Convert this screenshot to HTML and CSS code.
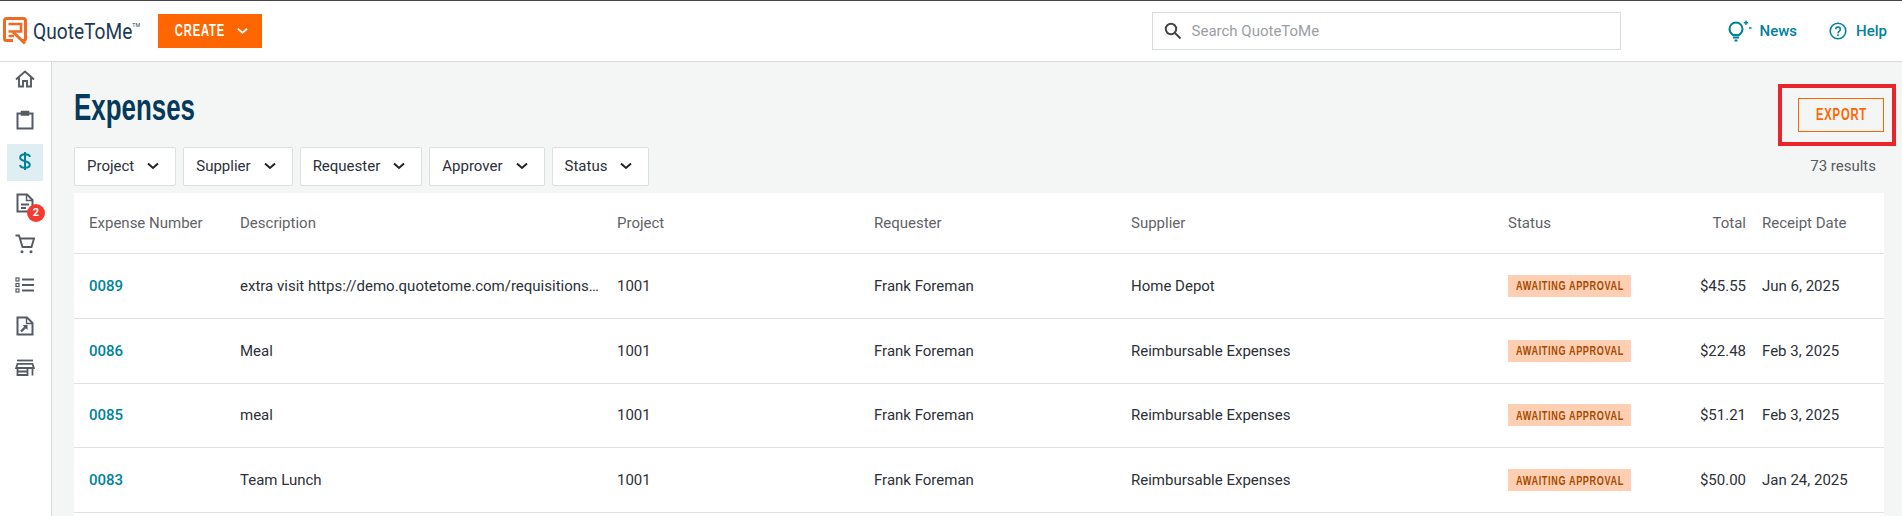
FILE: index.html
```html
<!DOCTYPE html>
<html lang="en">
<head>
    <meta charset="UTF-8">
    <title>Expenses - QuoteToMe</title>
    <link rel="stylesheet" href="styles.css">
</head>
<body>
    <header class="topbar">
        <div class="brand">
            <svg class="brand-mark" viewBox="0 0 24 28" width="24" height="28" fill="none" stroke="#f26a21" stroke-width="3">
                <path d="M10 23.500H3.500A2 2 0 0 1 1.500 21.500V3.500A2 2 0 0 1 3.500 1.500H20.500A2 2 0 0 1 22.500 3.500V21.500A2 2 0 0 1 20.500 23.500H19"/>
                <path d="M5.500 7H18V14.500H5.500M5.500 19H11" stroke-width="2.600"/>
                <path d="M10 15L22 26.500" stroke-width="3"/>
            </svg>
            <span class="brand-name">QuoteToMe<sup>TM</sup></span>
        </div>
        <button class="create-btn"><span class="narrow">CREATE</span>
            <svg viewBox="0 0 12 8" width="11" height="8" fill="none" stroke="#fff" stroke-width="2"><path d="M1 1.500L6 6L11 1.500"/></svg>
        </button>
        <div class="search-box">
            <svg viewBox="0 0 18 18" width="18" height="18" fill="none" stroke="#444" stroke-width="2"><circle cx="7" cy="7" r="5.200"/><path d="M11 11L16.500 16.500"/></svg>
            <span>Search QuoteToMe</span>
        </div>
        <a class="top-link news">
            <svg viewBox="0 0 24 22" width="24" height="22" fill="none" stroke="#00829b" stroke-width="2">
                <path d="M5 15C2.800 13.500 1.500 11.500 1.500 9A6.500 6.500 0 0 1 14.500 9C14.500 11.500 13.200 13.500 11 15Z"/>
                <path d="M5 17.500H11M6.500 20.500H9.500"/>
                <path d="M18 0.500V5M15.800 2.800H20.200M21 8H23.500" stroke-width="1.400"/>
            </svg>
            News
        </a>
        <a class="top-link help">
            <svg viewBox="0 0 18 18" width="18" height="18" fill="none" stroke="#00829b" stroke-width="1.600">
                <circle cx="9" cy="9" r="7.800"/>
                <path d="M6.700 7.200A2.300 2.300 0 1 1 10.300 9.200C9.300 9.800 9 10.200 9 11.200"/>
                <path d="M9 12.300V14"/>
            </svg>
            Help
        </a>
    </header>

    <div class="layout">
        <nav class="sidebar">
            <a class="nav-item"><svg viewBox="0 0 20 18" width="20" height="18" fill="none" stroke="#555b63" stroke-width="1.900"><path d="M1 9.500L10 1.500L19 9.500M4 7.500V16.500H8V11H12V16.500H16V7.500"/></svg></a>
            <a class="nav-item"><svg viewBox="0 0 20 20" width="20" height="20" fill="none" stroke="#555b63" stroke-width="2"><path d="M6 3.500H2.500V18.500H17.500V3.500H14"/><path d="M6.500 1.500H13.500V5H6.500Z" fill="#555b63" stroke-width="1.500"/></svg></a>
            <a class="nav-item active"><svg viewBox="0 0 12 20" width="12" height="20" fill="none" stroke="#00829b" stroke-width="2"><path d="M10.800 6C10.800 4 9 3.300 6 3.300S1.200 4.500 1.200 6.800C1.200 9.200 3.500 9.600 6 10.200S10.800 11.500 10.800 13.800C10.800 16 9 16.800 6 16.800S1.200 16 1.200 14"/><path d="M6 1V19"/></svg></a>
            <a class="nav-item has-badge">
                <svg viewBox="0 0 18 20" width="18" height="20" fill="none" stroke="#555b63" stroke-width="2"><path d="M1.500 1.500H11L16.500 7V18.500H1.500Z"/><path d="M10.500 1.500V7.500H16.500" stroke-width="1.400"/><path d="M5 11.500H13M5 15H10"/></svg>
                <span class="badge">2</span>
            </a>
            <a class="nav-item"><svg viewBox="0 0 20 20" width="20" height="20" fill="none" stroke="#555b63" stroke-width="1.900"><path d="M0.500 1.500H4L7.500 13H16.500L19 4.500H4.800"/><circle cx="7" cy="17.800" r="1.500" fill="#555b63" stroke="none"/><circle cx="16" cy="17.800" r="1.500" fill="#555b63" stroke="none"/></svg></a>
            <a class="nav-item"><svg viewBox="0 0 20 16" width="20" height="16" fill="none" stroke="#555b63" stroke-width="1.200"><rect x="1" y="1" width="3" height="3"/><rect x="1" y="6.500" width="3" height="3"/><rect x="1" y="12" width="3" height="3"/><path d="M7 2.500H19M7 8H19M7 13.500H19" stroke-width="2"/></svg></a>
            <a class="nav-item"><svg viewBox="0 0 18 20" width="18" height="20" fill="none" stroke="#555b63" stroke-width="2"><path d="M1.500 1.500H11L16.500 7V18.500H1.500Z"/><path d="M10.500 1.500V7.500H16.500" stroke-width="1.400"/><path d="M5 15.500L9.500 11" stroke-width="2.400"/><path d="M6.500 9H11.500V14Z" fill="#555b63" stroke="none"/></svg></a>
            <a class="nav-item"><svg viewBox="0 0 20 17" width="20" height="17" fill="none" stroke="#555b63" stroke-width="1.800"><path d="M2 1.500H18"/><path d="M2.500 4.800H17.500L18.800 9H1.200Z"/><path d="M2.500 9V16H12.500V9M17.500 9V16.500M2.500 12.500H12.500"/></svg></a>
        </nav>

        <main class="content">
            <div class="title-row">
                <h1>Expenses</h1>
                <div class="export-mark"><button class="export-btn"><span class="narrow">EXPORT</span></button></div>
            </div>
            <div class="filter-row">
                <div class="filters">
                    <button class="filter">Project <svg viewBox="0 0 12 8" width="12" height="8" fill="none" stroke="#222" stroke-width="2"><path d="M1 1.500L6 6L11 1.500"/></svg></button>
                    <button class="filter">Supplier <svg viewBox="0 0 12 8" width="12" height="8" fill="none" stroke="#222" stroke-width="2"><path d="M1 1.500L6 6L11 1.500"/></svg></button>
                    <button class="filter">Requester <svg viewBox="0 0 12 8" width="12" height="8" fill="none" stroke="#222" stroke-width="2"><path d="M1 1.500L6 6L11 1.500"/></svg></button>
                    <button class="filter">Approver <svg viewBox="0 0 12 8" width="12" height="8" fill="none" stroke="#222" stroke-width="2"><path d="M1 1.500L6 6L11 1.500"/></svg></button>
                    <button class="filter">Status <svg viewBox="0 0 12 8" width="12" height="8" fill="none" stroke="#222" stroke-width="2"><path d="M1 1.500L6 6L11 1.500"/></svg></button>
                </div>
                <span class="results">73 results</span>
            </div>

            <table class="expenses">
                <colgroup>
                    <col class="col-number"><col class="col-desc"><col class="col-project"><col class="col-requester"><col class="col-supplier"><col class="col-status"><col class="col-total"><col class="col-date">
                </colgroup>
                <thead>
                    <tr>
                        <th>Expense Number</th><th>Description</th><th>Project</th><th>Requester</th><th>Supplier</th><th>Status</th><th class="total">Total</th><th class="date">Receipt Date</th>
                    </tr>
                </thead>
                <tbody>
                    <tr>
                        <td><a class="num">0089</a></td><td class="desc">extra visit https://demo.quotetome.com/requisitions…</td><td>1001</td><td>Frank Foreman</td><td>Home Depot</td>
                        <td><span class="status"><span class="narrow">AWAITING APPROVAL</span></span></td><td class="total">$45.55</td><td class="date">Jun 6, 2025</td>
                    </tr>
                    <tr>
                        <td><a class="num">0086</a></td><td class="desc">Meal</td><td>1001</td><td>Frank Foreman</td><td>Reimbursable Expenses</td>
                        <td><span class="status"><span class="narrow">AWAITING APPROVAL</span></span></td><td class="total">$22.48</td><td class="date">Feb 3, 2025</td>
                    </tr>
                    <tr>
                        <td><a class="num">0085</a></td><td class="desc">meal</td><td>1001</td><td>Frank Foreman</td><td>Reimbursable Expenses</td>
                        <td><span class="status"><span class="narrow">AWAITING APPROVAL</span></span></td><td class="total">$51.21</td><td class="date">Feb 3, 2025</td>
                    </tr>
                    <tr>
                        <td><a class="num">0083</a></td><td class="desc">Team Lunch</td><td>1001</td><td>Frank Foreman</td><td>Reimbursable Expenses</td>
                        <td><span class="status"><span class="narrow">AWAITING APPROVAL</span></span></td><td class="total">$50.00</td><td class="date">Jan 24, 2025</td>
                    </tr>
                    <tr>
                        <td></td><td></td><td></td><td></td><td></td><td></td><td></td><td></td>
                    </tr>
                </tbody>
            </table>
        </main>
    </div>
</body>
</html>
```

FILE: styles.css
```css
* {
    box-sizing: border-box;
}
html, body {
    height: 100%;
}
body {
    margin: 0;
    overflow: hidden;
    font-family: Roboto, sans-serif;
    font-size: 15px;
    color: #2c3038;
    background-color: white;
}
button {
    font-family: inherit;
    cursor: pointer;
}

/* no condensed font installed, so squeeze the bold sans for the display text */
.narrow {
    display: inline-block;
    flex: none;
    white-space: nowrap;
    font-family: "Liberation Sans", sans-serif;
    font-weight: bold;
    transform: scaleX(0.7);
}

.topbar {
    display: flex;
    align-items: center;
    height: 62px;
    border-top: 1px solid #444;
    border-bottom: 1px solid #d9dcdc;
    padding-right: 15px;
}
.brand {
    display: flex;
    align-items: center;
    gap: 6px;
    flex: 0 0 155px;
    margin-left: 3px;
}
.brand-name {
    display: inline-block;
    white-space: nowrap;
    font-size: 22px;
    color: #1d3a54;
    transform: scaleX(0.87);
    transform-origin: left center;
}
.brand-name sup {
    font-size: 6px;
    vertical-align: 12px;
}
.create-btn {
    display: flex;
    align-items: center;
    justify-content: center;
    gap: 0;
    height: 34px;
    width: 106px;
    padding: 0;
    border: none;
    background-color: #ff6600;
    color: white;
    font-size: 16px;
    letter-spacing: 1.200px;
}
.create-btn .narrow {
    margin-left: -8px;
    margin-right: 1px;
}
.search-box {
    display: flex;
    align-items: center;
    gap: 10px;
    flex: 0 0 469px;
    height: 38px;
    margin-left: 890px;
    padding-left: 11px;
    border: 1px solid #d9dcdc;
    color: #9a9ea3;
}
.top-link {
    display: flex;
    align-items: center;
    color: #00829b;
    font-weight: 500;
}
.news {
    gap: 8px;
    margin-left: 107px;
}
.help {
    gap: 9px;
    margin-left: 32px;
}

.layout {
    display: flex;
    height: 454px;
}
.sidebar {
    flex: 0 0 52px;
    display: flex;
    flex-direction: column;
    align-items: center;
    gap: 4.200px;
    padding-right: 1px;
    border-right: 1px solid #d9dcdc;
}
.nav-item {
    position: relative;
    flex: none;
    display: flex;
    align-items: center;
    justify-content: center;
    width: 36px;
    height: 37px;
    padding-bottom: 3px;
}
.nav-item.active {
    background-color: #dfeef2;
}
.badge {
    position: absolute;
    top: 18px;
    left: 20px;
    width: 18px;
    height: 18px;
    border-radius: 50%;
    background-color: #f53b30;
    color: white;
    font-size: 11px;
    font-weight: bold;
    line-height: 18px;
    text-align: center;
}

.content {
    flex: 1;
    padding: 0 18px 0 22px;
    background-color: #f4f6f5;
    overflow: hidden;
}
.title-row {
    display: flex;
    justify-content: space-between;
    align-items: flex-start;
    height: 85px;
}
h1 {
    margin: 24px 0 0;
    font-family: "Liberation Sans", sans-serif;
    font-size: 36px;
    font-weight: bold;
    line-height: 44px;
    color: #053a5c;
    transform: scaleX(0.72);
    transform-origin: left center;
}
.export-mark {
    position: relative;
    margin-top: 36px;
}
.export-mark::after {
    content: "";
    position: absolute;
    top: -14px;
    right: -12px;
    bottom: -14px;
    left: -20px;
    border: 4px solid #e8262a;
    pointer-events: none;
}
.export-btn {
    display: flex;
    align-items: center;
    justify-content: center;
    width: 86px;
    height: 34px;
    padding: 0;
    border: 1px solid #ff6600;
    background: transparent;
    color: #ff6600;
    font-size: 16px;
    letter-spacing: 1.200px;
}
.filter-row {
    display: flex;
    justify-content: space-between;
    align-items: center;
    height: 39px;
    margin-bottom: 7px;
}
.filters {
    display: flex;
    gap: 7px;
}
.filter {
    display: flex;
    align-items: center;
    gap: 13px;
    height: 39px;
    padding: 0 16px 1px 12px;
    background-color: white;
    border: 1px solid #dcdfdf;
    border-radius: 2px;
    color: #2c3038;
    font-size: 15px;
}
.results {
    margin-right: 8px;
    margin-bottom: 2px;
    color: #555a60;
}

.expenses {
    width: 1810px;
    table-layout: fixed;
    border-collapse: separate;
    border-spacing: 0;
    background-color: white;
}
.col-number { width: 151px; }
.col-desc { width: 377px; }
.col-project { width: 257px; }
.col-requester { width: 257px; }
.col-supplier { width: 377px; }
.col-status { width: 167px; }
.col-total { width: 94px; }
.col-date { width: 130px; }
.expenses th, .expenses td {
    padding: 0 15px;
    border-bottom: 1px solid #e0e2e2;
    text-align: left;
}
.expenses th {
    height: 61px;
    font-weight: normal;
    color: #5f6368;
}
.expenses td {
    height: 64.750px;
}
.expenses td.desc {
    white-space: nowrap;
    padding-right: 0;
}
.expenses .total {
    text-align: right;
    padding-right: 8px;
}
.expenses .date {
    padding-left: 8px;
    padding-right: 0;
}
.num {
    color: #00829b;
    font-weight: 500;
}
.status {
    display: flex;
    align-items: center;
    justify-content: center;
    width: 123px;
    height: 22px;
    background-color: #ffcfb3;
    color: #a64b00;
    font-size: 13px;
    letter-spacing: 0.900px;
}
```
